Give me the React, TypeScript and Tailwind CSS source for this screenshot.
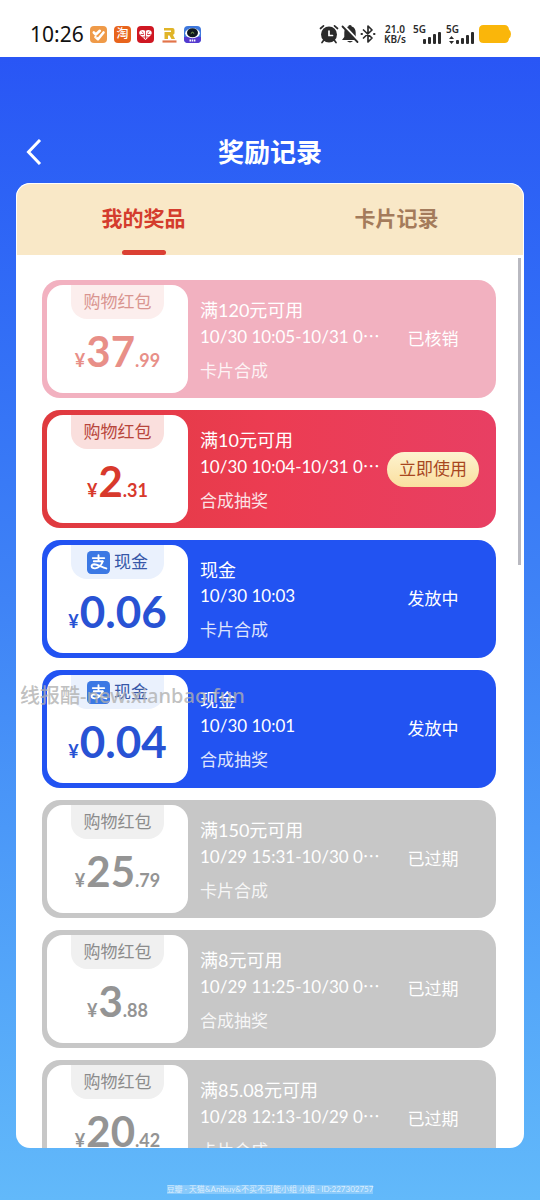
import { ChevronLeft } from "lucide-react";

type Tone = "used" | "active" | "cash" | "expired";

type Reward = {
  tone: Tone;
  whole: string;
  cents?: string;
  title: string;
  date: string;
  source: string;
  status: string;
};

const rewards: Reward[] = [
  { tone: "used", whole: "37", cents: ".99", title: "满120元可用", date: "10/30 10:05-10/31 0", source: "卡片合成", status: "已核销" },
  { tone: "active", whole: "2", cents: ".31", title: "满10元可用", date: "10/30 10:04-10/31 0", source: "合成抽奖", status: "立即使用" },
  { tone: "cash", whole: "0.06", title: "现金", date: "10/30 10:03", source: "卡片合成", status: "发放中" },
  { tone: "cash", whole: "0.04", title: "现金", date: "10/30 10:01", source: "合成抽奖", status: "发放中" },
  { tone: "expired", whole: "25", cents: ".79", title: "满150元可用", date: "10/29 15:31-10/30 0", source: "卡片合成", status: "已过期" },
  { tone: "expired", whole: "3", cents: ".88", title: "满8元可用", date: "10/29 11:25-10/30 0", source: "合成抽奖", status: "已过期" },
  { tone: "expired", whole: "20", cents: ".42", title: "满85.08元可用", date: "10/28 12:13-10/29 0", source: "卡片合成", status: "已过期" },
];

const tones = {
  used: { card: "bg-[#f2b1c0]", label: "bg-[#fceeed] text-[#d99590]", amount: "text-[42px] text-[#e88f88]" },
  active: { card: "bg-linear-to-r from-[#df3a3e] via-[#ec3c52] to-[#e83f63]", label: "bg-[#fadfdd] text-[#b8463c]", amount: "text-[42px] text-[#d8392c]" },
  cash: { card: "bg-[#2253f2]", label: "bg-[#eaf1fd] text-[#3657a8]", amount: "text-[44px] text-[#2852d4]" },
  expired: { card: "bg-[#c7c7c7]", label: "bg-[#f0f0f0] text-[#8c8c8c]", amount: "text-[42px] text-[#949494]" },
};

function AlipayIcon() {
  return (
    <svg width="23" height="23" viewBox="0 0 22 22" fill="none" stroke="#fff" strokeWidth="1.8" strokeLinecap="round">
      <rect width="22" height="22" rx="4" fill="#3b78e4" stroke="none" />
      <path d="M5.500 6.800h11M11 4v5.500M6.500 9.800h8.500" />
      <path d="M15 9.900c-1 3.200-3.800 6.500-7.200 6.700-4.200.2-4.600-3.700-.8-3.900 3.200 0 6.500 2.600 11.500 4" />
    </svg>
  );
}

function Signal({ bars, children }: { bars: number[]; children?: React.ReactNode }) {
  return (
    <div className="flex w-[28px] flex-col">
      <span className="text-[10px] leading-[9px] font-semibold">5G</span>
      <div className="-mt-[2px] flex items-end justify-end gap-[2px]">
        {children}
        {bars.map((h) => (
          <i key={h} className="w-[3px] rounded-[1px] bg-[#2b2b2b]" style={{ height: h }} />
        ))}
      </div>
    </div>
  );
}

function StatusBar() {
  return (
    <div className="flex h-[57px] shrink-0 items-center justify-between bg-white pt-[11px] pr-[29px] pl-[30px] text-[#2b2b2b]">
      <div className="flex items-center gap-[6px]">
        <span className="mr-[2px] w-[52px] font-['Noto_Sans'] text-[21px] leading-6 whitespace-nowrap text-[#111]">10:26</span>
        <svg width="17" height="17" viewBox="0 0 17 17" fill="none" stroke="#fff" strokeLinecap="round" strokeLinejoin="round">
          <rect width="17" height="17" rx="4" fill="#ef9a48" stroke="none" />
          <path d="M3.800 6.500l2 2 4-3.700" strokeWidth="2.600" />
          <path d="M5.500 11l2.500 2.200L13.500 6.500" strokeWidth="2.600" />
          <path d="M6 11.300l6-5.300" stroke="#ef9a48" strokeWidth=".6" />
        </svg>
        <span className="ml-[1px] flex size-[17px] items-center justify-center rounded-[4px] bg-[#e8641c] text-[12px] leading-none font-medium text-white">淘</span>
        <svg width="17" height="17" viewBox="0 0 17 17" fill="none">
          <rect width="17" height="17" rx="4" fill="#cf1722" />
          <path d="M8.500 14L3.500 9.500C0 6 4.500 2 8.500 5 12.500 2 17 6 13.500 9.500z" fill="#fff" />
          <path d="M5 5.500l1.500 2M8.500 5v8M12 5.500l-1.500 2M3.500 8.500h3.500M10 8.500h3.500M5.500 11h6" stroke="#cf1722" strokeWidth=".8" />
        </svg>
        <svg width="17" height="17" viewBox="0 0 17 17" fill="none" className="ml-[1px]">
          <path d="M3 2h8.500a2 2 0 012 2v3.500l-1.500 1.500 2 4h-3.500l-2-3.500H7V13H3.500V6H10V4.500H3z" fill="#e0b428" />
          <path d="M1.500 15.500h14" stroke="#e2744a" strokeWidth="2.200" />
        </svg>
        <svg width="17" height="17" viewBox="0 0 17 17">
          <rect width="17" height="17" rx="4" fill="#3e78dd" />
          <path d="M0 11h17v2a4 4 0 01-4 4H4a4 4 0 01-4-4z" fill="#5539cf" />
          <ellipse cx="8.500" cy="7.200" rx="7.300" ry="5" fill="#fff" />
          <ellipse cx="8.500" cy="6.700" rx="5.500" ry="4.500" fill="#101820" />
          <path d="M6.800 7.500q1.700-2.500 3.400 0" stroke="#93bb59" fill="none" />
          <path d="M5.500 14.500h6" stroke="#fff" strokeWidth="1.800" strokeDasharray="1.500 .7" />
        </svg>
      </div>
      <div className="flex items-center">
        <svg width="20" height="20" viewBox="0 0 20 20" fill="none" stroke="#2b2b2b" strokeWidth="1.700" strokeLinecap="round">
          <circle cx="10" cy="10.500" r="8" fill="#2b2b2b" stroke="none" />
          <path d="M1.500 4.500L4.500 1.800M18.500 4.500L15.500 1.800M4.500 16.500L3 18.500M15.500 16.500l1.500 2" />
          <path d="M10 7v4.500h3.500" stroke="#fff" />
        </svg>
        <svg width="20" height="20" viewBox="0 0 20 20" className="ml-[1px]">
          <path d="M10 1C8.800 1 8.300 1.800 8.300 2.500 5.500 3.300 4.300 5.500 4.300 8.500V13L2 16h16l-2.300-3V8.500c0-3-1.200-5.200-4-6C11.700 1.800 11.200 1 10 1zM7 17h6q-3 2.800-6 0z" fill="#2b2b2b" />
          <path d="M3.500 1.500l15 16" stroke="#fff" strokeWidth="3" />
          <path d="M2.500 2.500l15 15.500" stroke="#2b2b2b" strokeWidth="1.800" strokeLinecap="round" />
        </svg>
        <svg width="16" height="20" viewBox="0 0 16 20" fill="none" stroke="#2b2b2b" strokeWidth="1.700" strokeLinejoin="round" strokeLinecap="round">
          <path d="M3.500 6l8.500 8-4 4V2l4 4-8.500 8" />
          <path d="M1.500 10h.5M14 10h.5" strokeWidth="2" />
        </svg>
        <div className="ml-[7px] w-[24px] text-center font-['Noto_Sans'] text-[10px] leading-[10px] font-semibold whitespace-nowrap">
          21.0<br />KB/s
        </div>
        <div className="ml-[6px] flex gap-[5px] font-['Noto_Sans']">
          <Signal bars={[5, 7, 10, 12]} />
          <Signal bars={[4, 6, 9, 12]}>
            <svg width="5" height="8" viewBox="0 0 5 8" fill="#2b2b2b"><path d="M0 3l2.500-3L5 3zM0 5l2.500 3L5 5z" /></svg>
          </Signal>
        </div>
        <svg width="32" height="18" viewBox="0 0 32 18" fill="#fab60a" className="ml-[5px]">
          <path d="M4.500 0h21q4 0 4.500 4.500 2 1.500 2 4.500t-2 4.500q-.5 4.500-4.500 4.500h-21Q0 18 0 13.500v-9Q0 0 4.500 0z" />
        </svg>
      </div>
    </div>
  );
}

function RewardCard({ item }: { item: Reward }) {
  const tone = tones[item.tone];

  return (
    <li className={`flex h-[118px] shrink-0 items-stretch rounded-[18px] py-[5px] pr-[17px] pl-[5px] text-white ${tone.card}`}>
      <div className="flex w-[141px] shrink-0 flex-col items-center rounded-[16px] bg-white">
        <div className={`flex h-[34px] w-[93px] items-center justify-center gap-1 rounded-b-[16px] text-[17px] whitespace-nowrap ${tone.label}`}>
          {item.tone === "cash" ? <><AlipayIcon />现金</> : "购物红包"}
        </div>
        <div className={`mt-2 flex items-baseline leading-[48px] font-bold ${tone.amount}`}>
          <span className="mr-[1px] text-[18px]">¥</span>
          <span>{item.whole}</span>
          <span className="text-[18px]">{item.cents}</span>
        </div>
      </div>
      <div className="ml-3 min-w-0 flex-1 pt-3 leading-[26px] whitespace-nowrap">
        <h2 className="text-[18px]">{item.title}</h2>
        <p className="text-[17px]">
          {item.date}
          {item.date.length > 11 && <span className="font-['Noto_Sans_CJK_SC']">⋯</span>}
        </p>
        <p className="mt-2 text-[17px] opacity-85">{item.source}</p>
      </div>
      <div className="flex w-[92px] shrink-0 items-center justify-center text-[17px]">
        {item.tone === "active" ? (
          <button className="h-[35px] w-full rounded-full bg-linear-to-b from-[#fdf3cf] to-[#fadf9f] text-[#a8471f]">{item.status}</button>
        ) : (
          <span>{item.status}</span>
        )}
      </div>
    </li>
  );
}

export default function App() {
  return (
    <div lang="zh-CN" className="relative flex h-screen flex-col overflow-hidden bg-linear-to-b from-[#2850f5] via-[#3f83f6] to-[#62b9fa] font-[Lato,'Noto_Sans_CJK_SC',sans-serif]">
      <StatusBar />

      <header className="grid shrink-0 grid-cols-[64px_1fr_64px] items-center pt-16 text-white">
        <button aria-label="返回" className="flex h-[62px] items-center pl-[26px]">
          <svg width="16" height="26" viewBox="0 0 16 26" fill="none" stroke="currentColor" strokeWidth="3">
            <path d="M14 1L2.500 13 14 25" />
          </svg>
        </button>
        <h1 className="text-center text-[26px] leading-8 font-bold">奖励记录</h1>
      </header>

      <main className="relative mx-4 flex min-h-0 flex-1 flex-col overflow-hidden rounded-[14px] bg-white">
        <nav className="grid h-[72px] shrink-0 grid-cols-2 rounded-t-[14px] border border-b-0 border-white bg-[#f9e8c7] text-[21px] font-bold">
          <button className="flex flex-col items-center justify-between pt-[18px] text-[#d43c2d]">
            <span className="leading-8">我的奖品</span>
            <i className="h-[5px] w-[44px] rounded-full bg-[#db4033]" />
          </button>
          <button className="flex flex-col items-center pt-[18px] text-[#a47b5b]">
            <span className="leading-8">卡片记录</span>
          </button>
        </nav>
        <ul className="flex min-h-0 flex-1 flex-col gap-3 overflow-hidden pt-[25px] pr-7 pl-[26px]">
          {rewards.map((item) => (
            <RewardCard key={item.date} item={item} />
          ))}
        </ul>
        <div className="absolute top-[75px] right-[3px] h-[307px] w-[3px] bg-[#b9b9c0]" />
      </main>

      <footer className="flex h-[52px] shrink-0 items-end justify-center pb-[6px]">
        <p className="bg-white/25 text-[8px] leading-[9px] whitespace-nowrap text-white/70">豆瓣 · 天猫&amp;Anibuy&amp;不买不可能小组 小组 · ID:227302757</p>
      </footer>

      <div className="pointer-events-none absolute top-[683px] left-5 font-['Noto_Sans','Noto_Sans_CJK_SC',sans-serif] text-[20px] leading-[26px] font-medium whitespace-nowrap text-[#b0b0b0]/80">
        线报酷-new.xianbao.fun
      </div>
    </div>
  );
}
